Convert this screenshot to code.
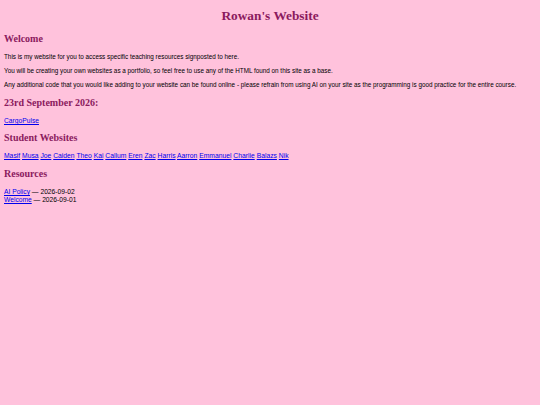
export default function App() {
  const names = ["Masif", "Musa", "Joe", "Caiden", "Theo", "Kai", "Callum", "Eren", "Zac", "Harris", "Aarron", "Emmanuel", "Charlie", "Balazs", "Nik"];
  const h2 = "font-['Liberation_Serif',serif] font-bold text-[10px] leading-[12px] text-[#8b1a5e]";
  const link = "text-[#0000ee] underline";
  return (
    <div className="min-h-[405px] w-[540px] bg-[#ffc2dc] text-black font-['Liberation_Sans',Arial,sans-serif] text-[6.33px] leading-[8px]">
      <div className="pt-[8px] text-center font-['Liberation_Serif',serif] font-bold text-[13.33px] leading-[16px] text-[#8b1a5e]">Rowan's Website</div>
      <div className="pl-[4px]">
        <div className={`mt-[9px] ${h2}`}>Welcome</div>
        <p className="mt-[8px]">This is my website for you to access specific teaching resources signposted to here.</p>
        <p className="mt-[6px]">You will be creating your own websites as a portfolio, so feel free to use any of the HTML found on this site as a base.</p>
        <p className="mt-[6px]">Any additional code that you would like adding to your website can be found online - please refrain from using AI on your site as the programming is good practice for the entire course.</p>
        <div className={`mt-[8px] ${h2}`}>23rd September 2026:</div>
        <p className="mt-[8px] text-[6.7px]"><a className={link} href="#">CargoPulse</a></p>
        <div className={`mt-[7px] ${h2}`}>Student Websites</div>
        <p className="mt-[8px] text-[6.75px]">
          {names.map((n, i) => (
            <span key={n}>
              <a className={link} href="#">{n}</a>
              {i < names.length - 1 ? " " : ""}
            </span>
          ))}
        </p>
        <div className={`mt-[8px] ${h2}`}>Resources</div>
        <div className="mt-[8px] text-[6.7px]">
          <div><a className={link} href="#">AI Policy</a> — 2026-09-02</div>
          <div><a className={link} href="#">Welcome</a> — 2026-09-01</div>
        </div>
      </div>
    </div>
  );
}
